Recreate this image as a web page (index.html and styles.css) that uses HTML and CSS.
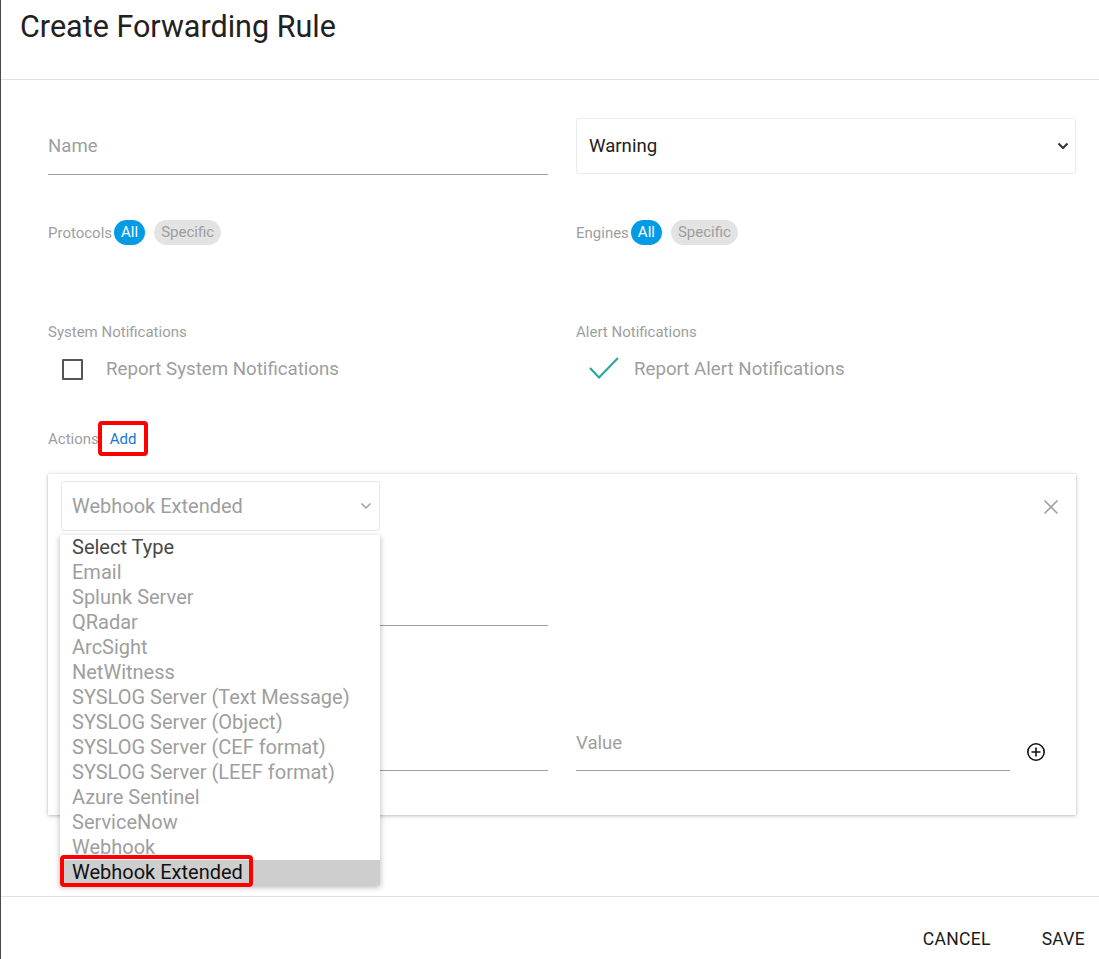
FILE: index.html
```html
<!DOCTYPE html>
<html>
<head>
<meta charset="utf-8">
<link rel="stylesheet" href="styles.css">
</head>
<body>
<div class="modal">
  <header class="modal-header">
    <h1 class="title">Create Forwarding Rule</h1>
  </header>
  <main class="form">
    <div class="row row-top">
      <div class="text-field name-field"><span class="placeholder">Name</span></div>
      <div class="select-box">
        <span class="select-value">Warning</span>
        <svg class="chev" width="12" height="8" viewBox="0 0 12 8"><path d="M1.5 1.5 L6 6 L10.5 1.5" fill="none" stroke="#333" stroke-width="2"/></svg>
      </div>
    </div>
    <div class="row row-chips">
      <div class="chips"><span class="chip-label">Protocols</span><span class="chip on">All</span><span class="chip off">Specific</span></div>
      <div class="chips"><span class="chip-label">Engines</span><span class="chip on">All</span><span class="chip off">Specific</span></div>
    </div>
    <div class="row row-notif">
      <div class="notif">
        <div class="small-label">System Notifications</div>
        <div class="check-row">
          <span class="checkbox"></span>
          <span class="check-text">Report System Notifications</span>
        </div>
      </div>
      <div class="notif">
        <div class="small-label">Alert Notifications</div>
        <div class="check-row checked">
          <svg class="tick" width="32" height="24" viewBox="0 0 32 24"><path d="M2 12 L11 21.5 L30 2" fill="none" stroke="#26a69a" stroke-width="2"/></svg>
          <span class="check-text">Report Alert Notifications</span>
        </div>
      </div>
    </div>
    <div class="actions-row">
      <span class="small-label">Actions</span>
      <span class="add-link"><span class="mark">Add</span></span>
    </div>
    <section class="card">
      <div class="card-top">
        <div class="type-select-wrap">
          <div class="type-select">
            <span>Webhook Extended</span>
            <svg class="chev-sm" width="12" height="8" viewBox="0 0 12 8"><path d="M1.5 1.5 L6 6 L10.5 1.5" fill="none" stroke="#9e9e9e" stroke-width="1.5"/></svg>
          </div>
          <ul class="dropdown">
            <li class="first">Select Type</li>
            <li>Email</li>
            <li>Splunk Server</li>
            <li>QRadar</li>
            <li>ArcSight</li>
            <li>NetWitness</li>
            <li>SYSLOG Server (Text Message)</li>
            <li>SYSLOG Server (Object)</li>
            <li>SYSLOG Server (CEF format)</li>
            <li>SYSLOG Server (LEEF format)</li>
            <li>Azure Sentinel</li>
            <li>ServiceNow</li>
            <li>Webhook</li>
            <li class="selected"><span class="mark mark-item">Webhook Extended</span></li>
          </ul>
        </div>
        <svg class="close" width="16" height="16" viewBox="0 0 16 16"><path d="M1.5 1.5 L14.5 14.5 M14.5 1.5 L1.5 14.5" stroke="#9e9e9e" stroke-width="1.6" fill="none"/></svg>
      </div>
      <div class="card-grid url-row">
        <div class="text-field line-only"></div>
      </div>
      <div class="card-grid kv-row">
        <div class="text-field line-only"></div>
        <div class="text-field value-field"><span class="placeholder">Value</span></div>
        <svg class="plus" width="20" height="20" viewBox="0 0 20 20"><circle cx="10" cy="10" r="8.2" fill="none" stroke="#111" stroke-width="1.6"/><path d="M10 5.5 V14.5 M5.5 10 H14.5" stroke="#111" stroke-width="1.6"/></svg>
      </div>
    </section>
  </main>
  <footer class="modal-footer">
    <button class="btn">CANCEL</button>
    <button class="btn">SAVE</button>
  </footer>
</div>
</body>
</html>
```
FILE: styles.css
```css
* { box-sizing: border-box; }
html, body { margin: 0; padding: 0; background: #fff; }
body { font-family: Roboto, "Noto Sans", "Liberation Sans", sans-serif; color: #212121; }
.modal { width: 1099px; height: 959px; border-left: 1px solid #4a4a4a; display: flex; flex-direction: column; overflow: hidden; }
.modal-header { height: 80px; border-bottom: 1px solid #e0e0e0; padding: 9px 0 0 19px; }
.title { margin: 0; font-size: 30.5px; font-weight: 400; line-height: 36px; color: #212121; }
.form { padding: 38px 23px 0 47px; flex: 1; }
.row { display: grid; grid-template-columns: 500px 500px; column-gap: 28px; }
.row-top { height: 57px; }
.text-field { border-bottom: 1px solid #9e9e9e; display: flex; align-items: center; }
.name-field { height: 57px; padding-top: 0; }
.placeholder { color: #9e9e9e; font-size: 18.6px; }
.select-box { height: 56px; border: 1px solid #ececec; border-radius: 3px; display: flex; align-items: center; justify-content: space-between; padding: 0 6px 0 12px; }
.select-value { font-size: 18.6px; color: #212121; }
.row-chips { margin-top: 45px; height: 25px; }
.chips { display: flex; align-items: center; }
.chip-label { font-size: 15px; color: #9e9e9e; margin-right: 2px; }
.chip { height: 25px; border-radius: 13px; font-size: 15px; line-height: 25px; padding: 0 7px; }
.chip.on { background: #039be5; color: #fff; margin-right: 9px; }
.chip.off { background: #e3e3e3; color: #9e9e9e; }
.row-notif { margin-top: 79px; }
.small-label { font-size: 15px; line-height: 16px; color: #9e9e9e; }
.check-row { display: flex; align-items: center; height: 24px; margin-top: 17px; padding-left: 14px; }
.checkbox { width: 21px; height: 21px; border: 2px solid #555; border-radius: 1px; margin-right: 23px; }
.check-text { font-size: 18.7px; color: #9e9e9e; }
.tick { margin-right: 14px; margin-top: -2px; }
.checked { padding-left: 12px; }
.actions-row { margin-top: 43px; height: 30px; display: flex; align-items: center; }
.add-link { font-size: 15px; color: #1976d2; margin-left: 11px; }
.mark { position: relative; }
.mark::after { content: ""; position: absolute; border: 4px solid #ff0000; border-radius: 4px; }
.add-link .mark::after { left: -12px; right: -11px; top: -9px; bottom: -8px; }
.card { position: relative; margin-top: 20px; height: 341px; box-shadow: 0 1px 4px rgba(0,0,0,0.25), 0 0 1px rgba(0,0,0,0.15); padding: 7px 0 0 13px; }
.card-top { display: flex; justify-content: space-between; align-items: flex-start; height: 50px; }
.type-select-wrap { position: relative; width: 319px; }
.type-select { height: 50px; border: 1px solid #e8e8e8; border-radius: 3px; display: flex; align-items: center; justify-content: space-between; padding: 0 7px 0 10px; font-size: 20px; color: #9e9e9e; }
.close { margin: 18px 17px 0 0; }
.dropdown { position: absolute; z-index: 5; left: -1px; top: 54px; width: 320px; margin: 0; padding: 0; list-style: none; background: #fff; box-shadow: 0 2px 6px rgba(0,0,0,0.3); }
.dropdown li { font-size: 20px; line-height: 25px; height: 25px; padding-left: 12px; color: #9e9e9e; white-space: nowrap; }
.dropdown li.first { color: #484848; }
.dropdown li.selected { background: #cecece; color: #111; }
.mark-item::after { left: -12px; right: -10px; top: -5px; bottom: -3px; }
.card-grid { display: grid; grid-template-columns: 487px 434px 20px; column-gap: 28px; padding-right: 0; }
.url-row { margin-top: 44px; }
.line-only { height: 51px; }
.kv-row { margin-top: 94px; align-items: end; }
.value-field { height: 51px; align-items: flex-start; padding-top: 12px; }
.plus { margin-left: -12px; margin-bottom: 9px; }
.modal-footer { height: 63px; border-top: 1px solid #e0e0e0; display: flex; justify-content: flex-end; align-items: center; padding: 21px 14px 0 0; gap: 51px; }
.btn { background: none; border: none; padding: 0; font-family: Roboto, "Liberation Sans", sans-serif; font-size: 17.5px; font-weight: 400; letter-spacing: 0.3px; color: #1a1a1a; }
```
